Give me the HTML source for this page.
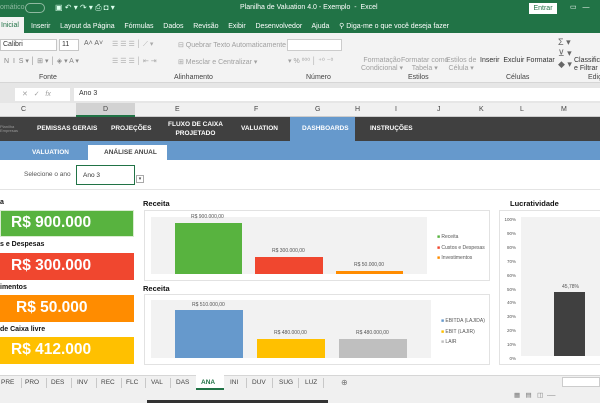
<!DOCTYPE html>
<html><head><meta charset="utf-8"><style>
*{margin:0;padding:0;box-sizing:border-box}
body{width:600px;height:403px;overflow:hidden;position:relative;background:#fff;font-family:"Liberation Sans",sans-serif;font-size:7px;color:#333}
.a{position:absolute;white-space:nowrap}
.g{color:#a0a0a0}
.b{font-weight:bold}
.t{position:absolute;top:379px;font-size:6.5px;color:#444}
.s{position:absolute;top:378px;width:1px;height:10px;background:#c8c8c8}
</style></head><body>
<!-- title bar -->
<div class="a" style="left:0;top:0;width:600px;height:33px;background:#217346"></div>
<div class="a" style="left:0;top:4px;color:#8fb9a0;font-size:7px">omático</div>
<div class="a" style="left:25px;top:3px;width:20px;height:10px;border:1px solid #8fb9a0;border-radius:6px"></div>
<div class="a" style="left:55px;top:3px;color:#dfe;font-size:8px">▣ ↶ ▾ ↷ ▾ ⎙ ◘ ▾</div>
<div class="a" style="left:240px;top:4px;color:#fff;font-size:7px">Planilha de Valuation 4.0 - Exemplo &nbsp;-&nbsp; Excel</div>
<div class="a" style="left:529px;top:3px;width:28px;height:11px;background:#fff;color:#217346;font-size:7px;text-align:center;line-height:11px">Entrar</div>
<div class="a" style="left:570px;top:3px;color:#fff;font-size:7px">▭ &nbsp; —</div>
<div class="a" style="left:0;top:17px;width:24px;height:16px;background:#f3f3f3"></div>
<div class="a" style="left:1px;top:22px;color:#217346;font-size:7px">Inicial</div>
<div class="a" style="left:31px;top:22px;color:#fff;font-size:7px;word-spacing:0">Inserir &nbsp;&nbsp;&nbsp; Layout da Página &nbsp;&nbsp;&nbsp; Fórmulas &nbsp;&nbsp;&nbsp; Dados &nbsp;&nbsp;&nbsp; Revisão &nbsp;&nbsp;&nbsp; Exibir &nbsp;&nbsp;&nbsp; Desenvolvedor &nbsp;&nbsp;&nbsp; Ajuda &nbsp;&nbsp;&nbsp; ⚲ Diga-me o que você deseja fazer</div>
<!-- ribbon -->
<div class="a" style="left:0;top:33px;width:600px;height:50px;background:#f3f3f3;border-bottom:1px solid #d6d6d6"></div>
<div class="a" style="left:0;top:39px;width:57px;height:12px;background:#fff;border:1px solid #c6c6c6;font-size:7px;padding:1px 2px">Calibri</div>
<div class="a" style="left:59px;top:39px;width:20px;height:12px;background:#fff;border:1px solid #c6c6c6;font-size:7px;padding:1px 2px">11</div>
<div class="a" style="left:84px;top:40px;color:#666">A˄ A˅</div>
<div class="a" style="left:4px;top:57px;color:#888">N &nbsp;I &nbsp;S ▾ │ ⊞ ▾ │ ◈ ▾ A ▾</div>
<div class="a" style="left:39px;top:74px;color:#444">Fonte</div>
<div class="a" style="left:112px;top:40px;color:#aaa">☰ ☰ ☰ │ ⟋ ▾</div>
<div class="a" style="left:112px;top:57px;color:#aaa">☰ ☰ ☰ │ ⇤ ⇥</div>
<div class="a g" style="left:178px;top:41px">⊟ Quebrar Texto Automaticamente</div>
<div class="a g" style="left:178px;top:58px">⊞ Mesclar e Centralizar ▾</div>
<div class="a" style="left:174px;top:74px;color:#444">Alinhamento</div>
<div class="a" style="left:287px;top:39px;width:55px;height:12px;background:#fff;border:1px solid #ccc"></div>
<div class="a g" style="left:288px;top:57px">▾ % ⁰⁰⁰ │ ⁺⁰ ⁻⁰</div>
<div class="a" style="left:306px;top:74px;color:#444">Número</div>
<div class="a g" style="left:361px;top:57px;text-align:center;line-height:8px">Formatação<br>Condicional ▾</div>
<div class="a g" style="left:401px;top:57px;text-align:center;line-height:8px">Formatar como<br>Tabela ▾</div>
<div class="a g" style="left:446px;top:57px;text-align:center;line-height:8px">Estilos de<br>Célula ▾</div>
<div class="a" style="left:408px;top:74px;color:#444">Estilos</div>
<div class="a" style="left:480px;top:57px;color:#333;line-height:8px">Inserir &nbsp;Excluir Formatar</div>
<div class="a" style="left:506px;top:74px;color:#444">Células</div>
<div class="a" style="left:558px;top:37px;color:#666;font-size:9px;line-height:11px">Σ ▾<br>⊻ ▾<br>◆ ▾</div>
<div class="a" style="left:574px;top:57px;line-height:8px">Classifica<br>e Filtrar</div>
<div class="a" style="left:588px;top:74px;color:#444">Ediç</div>
<!-- formula bar -->
<div class="a" style="left:0;top:83px;width:600px;height:20px;background:#e6e6e6"></div>
<div class="a" style="left:15px;top:88px;width:55px;height:13px;background:#fff"></div>
<div class="a g" style="left:22px;top:90px">✕ &nbsp; ✓ &nbsp; <i>fx</i></div>
<div class="a" style="left:74px;top:88px;width:526px;height:13px;background:#fff"></div>
<div class="a" style="left:79px;top:90px;color:#333">Ano 3</div>
<!-- column headers -->
<div class="a" style="left:0;top:103px;width:600px;height:14px;background:#f0f0f0;border-bottom:1px solid #ccc"></div>
<div class="a" style="left:76px;top:103px;width:59px;height:14px;background:#d2d2d2;border-bottom:2px solid #217346"></div>
<div class="a" style="left:0;top:106px;width:600px;font-size:7px;color:#444">
<span class="a" style="left:21px">C</span><span class="a" style="left:103px">D</span><span class="a" style="left:175px">E</span><span class="a" style="left:254px">F</span><span class="a" style="left:315px">G</span><span class="a" style="left:355px">H</span><span class="a" style="left:395px">I</span><span class="a" style="left:437px">J</span><span class="a" style="left:479px">K</span><span class="a" style="left:520px">L</span><span class="a" style="left:561px">M</span></div>
<!-- nav -->
<div class="a" style="left:0;top:117px;width:600px;height:43px;background:#6699cc"></div>
<div class="a" style="left:0;top:117px;width:290px;height:24px;background:#404040"></div>
<div class="a" style="left:355px;top:117px;width:245px;height:24px;background:#404040"></div>
<div class="a" style="left:0;top:125px;color:#999;font-size:4px;line-height:4px">Planilha<br>Empresas</div>
<div class="a b" style="left:37px;top:125px;color:#fff;font-size:6.5px">PEMISSAS GERAIS</div>
<div class="a b" style="left:111px;top:125px;color:#fff;font-size:6.5px">PROJEÇÕES</div>
<div class="a b" style="left:168px;top:120px;color:#fff;font-size:6.5px;text-align:center;line-height:9px">FLUXO DE CAIXA<br>PROJETADO</div>
<div class="a b" style="left:241px;top:125px;color:#fff;font-size:6.5px">VALUATION</div>
<div class="a b" style="left:302px;top:125px;color:#fff;font-size:6.5px">DASHBOARDS</div>
<div class="a b" style="left:370px;top:125px;color:#fff;font-size:6.5px">INSTRUÇÕES</div>
<div class="a b" style="left:32px;top:149px;color:#fff;font-size:6.5px">VALUATION</div>
<div class="a" style="left:88px;top:145px;width:79px;height:15px;background:#fff"></div>
<div class="a b" style="left:104px;top:149px;color:#444;font-size:6.5px">ANÁLISE ANUAL</div>
<!-- selector -->
<div class="a" style="left:24px;top:171px;color:#555;font-size:6.5px">Selecione o ano</div>
<div class="a" style="left:76px;top:165px;width:59px;height:20px;border:1px solid #217346;background:#fff"></div>
<div class="a" style="left:83px;top:172px;color:#333;font-size:6.5px">Ano 3</div>
<div class="a" style="left:136px;top:175px;width:8px;height:8px;border:1px solid #aaa;font-size:5px;text-align:center;line-height:6px;color:#444">▾</div>
<div class="a" style="left:0;top:189px;width:600px;height:1px;background:#e4e4e4"></div>
<!-- cards -->
<div class="a b" style="left:0;top:199px;font-size:7px;color:#111">a</div>
<div class="a" style="left:0;top:210px;width:134px;height:27px;background:#58b33f;border:1px solid #d9ecd0"></div>
<div class="a b" style="left:11px;top:214px;color:#fff;font-size:15.5px">R$ 900.000</div>
<div class="a b" style="left:0;top:241px;font-size:7px;color:#111">s e Despesas</div>
<div class="a" style="left:0;top:253px;width:134px;height:27px;background:#f0472f"></div>
<div class="a b" style="left:11px;top:257px;color:#fff;font-size:15.5px">R$ 300.000</div>
<div class="a b" style="left:0;top:284px;font-size:7px;color:#111">imentos</div>
<div class="a" style="left:0;top:295px;width:134px;height:27px;background:#ff8c00"></div>
<div class="a b" style="left:16px;top:299px;color:#fff;font-size:15.5px">R$ 50.000</div>
<div class="a b" style="left:0;top:326px;font-size:7px;color:#111">de Caixa livre</div>
<div class="a" style="left:0;top:337px;width:134px;height:27px;background:#ffc000"></div>
<div class="a b" style="left:11px;top:341px;color:#fff;font-size:15.5px">R$ 412.000</div>
<!-- chart 1 -->
<div class="a b" style="left:143px;top:199px;font-size:7.5px;color:#111">Receita</div>
<div class="a" style="left:144px;top:210px;width:346px;height:71px;border:1px solid #e2e2e2"></div>
<div class="a" style="left:151px;top:217px;width:276px;height:57px;background:#f2f2f2"></div>
<div class="a" style="left:175px;top:223px;width:67px;height:51px;background:#58b33f"></div>
<div class="a" style="left:255px;top:257px;width:68px;height:17px;background:#f0472f"></div>
<div class="a" style="left:336px;top:271px;width:67px;height:3px;background:#ff8c00"></div>
<div class="a" style="left:191px;top:214px;font-size:5px;color:#555">R$ 900.000,00</div>
<div class="a" style="left:272px;top:248px;font-size:5px;color:#555">R$ 300.000,00</div>
<div class="a" style="left:354px;top:262px;font-size:5px;color:#555">R$ 50.000,00</div>
<div class="a" style="left:437px;top:232px;font-size:5px;color:#555;line-height:10.5px"><span style="color:#58b33f">■</span> Receita<br><span style="color:#f0472f">■</span> Custos e Despesas<br><span style="color:#ff8c00">■</span> Investimentos</div>
<!-- chart 2 -->
<div class="a b" style="left:143px;top:284px;font-size:7.5px;color:#111">Receita</div>
<div class="a" style="left:144px;top:294px;width:346px;height:71px;border:1px solid #e2e2e2"></div>
<div class="a" style="left:151px;top:300px;width:280px;height:58px;background:#f2f2f2"></div>
<div class="a" style="left:175px;top:310px;width:68px;height:48px;background:#6699cc"></div>
<div class="a" style="left:257px;top:339px;width:68px;height:19px;background:#ffc000"></div>
<div class="a" style="left:339px;top:339px;width:68px;height:19px;background:#bfbfbf"></div>
<div class="a" style="left:192px;top:302px;font-size:5px;color:#555">R$ 510.000,00</div>
<div class="a" style="left:274px;top:330px;font-size:5px;color:#555">R$ 480.000,00</div>
<div class="a" style="left:356px;top:330px;font-size:5px;color:#555">R$ 480.000,00</div>
<div class="a" style="left:441px;top:316px;font-size:5px;color:#555;line-height:10.5px"><span style="color:#6699cc">■</span> EBITDA (LAJIDA)<br><span style="color:#ffc000">■</span> EBIT (LAJIR)<br><span style="color:#bfbfbf">■</span> LAIR</div>
<!-- lucratividade -->
<div class="a b" style="left:510px;top:199px;font-size:7.5px;color:#111">Lucratividade</div>
<div class="a" style="left:499px;top:210px;width:110px;height:155px;border:1px solid #e2e2e2"></div>
<div class="a" style="left:521px;top:217px;width:79px;height:139px;background:#f2f2f2"></div>
<div class="a" style="left:502px;top:213px;font-size:4.5px;color:#555;line-height:13.9px;text-align:right;width:14px">100%<br>90%<br>80%<br>70%<br>60%<br>50%<br>40%<br>30%<br>20%<br>10%<br>0%</div>
<div class="a" style="left:554px;top:292px;width:31px;height:64px;background:#404040"></div>
<div class="a" style="left:562px;top:284px;font-size:5px;color:#555">45,78%</div>
<!-- sheet tabs -->
<div class="a" style="left:0;top:375px;width:600px;height:15px;background:#f0f0f0;border-top:1px solid #d6d6d6"></div>
<div class="a" style="left:196px;top:375px;width:28px;height:15px;background:#fff;border-bottom:2px solid #217346"></div>
<span class="t" style="left:1px">PRE</span><span class="s" style="left:21px"></span>
<span class="t" style="left:25px">PRO</span><span class="s" style="left:46px"></span>
<span class="t" style="left:51px">DES</span><span class="s" style="left:71px"></span>
<span class="t" style="left:77px">INV</span><span class="s" style="left:96px"></span>
<span class="t" style="left:101px">REC</span><span class="s" style="left:121px"></span>
<span class="t" style="left:126px">FLC</span><span class="s" style="left:145px"></span>
<span class="t" style="left:151px">VAL</span><span class="s" style="left:170px"></span>
<span class="t" style="left:176px">DAS</span>
<span class="t b" style="left:201px;color:#217346">ANA</span>
<span class="t" style="left:230px">INI</span><span class="s" style="left:246px"></span>
<span class="t" style="left:252px">DUV</span><span class="s" style="left:272px"></span>
<span class="t" style="left:279px">SUG</span><span class="s" style="left:298px"></span>
<span class="t" style="left:305px">LUZ</span><span class="s" style="left:323px"></span>
<span class="t" style="left:341px;font-size:8px;top:378px;color:#777">⊕</span>
<div class="a" style="left:562px;top:377px;width:38px;height:10px;background:#fff;border:1px solid #ccc"></div>
<div class="a" style="left:0;top:390px;width:600px;height:13px;background:#f0f0f0"></div>
<div class="a" style="left:147px;top:400px;width:181px;height:3px;background:#333"></div>
<div class="a" style="left:514px;top:391px;font-size:6.5px;color:#777">▦ &nbsp; ▤ &nbsp; ◫ &nbsp;-—</div>
</body></html>
